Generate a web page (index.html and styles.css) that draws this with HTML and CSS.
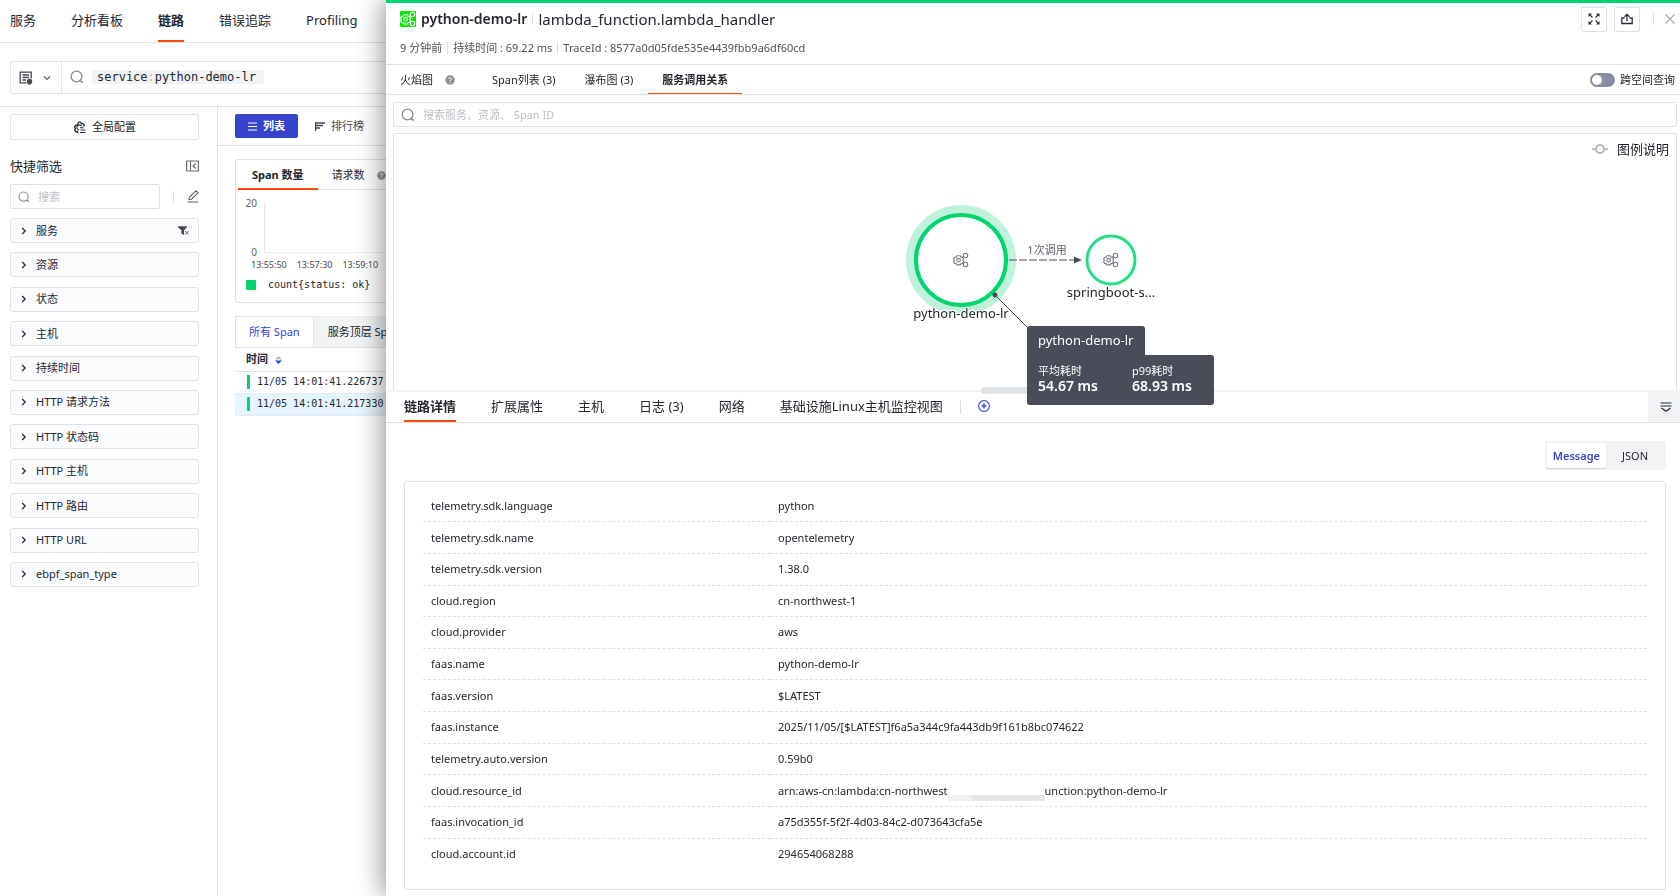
FILE: index.html
```html
<!DOCTYPE html>
<html lang="zh-CN">
<head>
  <meta charset="UTF-8" />
  <meta name="viewport" content="width=device-width, initial-scale=1.0" />
  <title>链路</title>
  <link rel="stylesheet" href="styles.css">
</head>
<body>
  <!-- Shared icons -->
  <svg class="sprite" aria-hidden="true">
    <symbol id="i-search" viewBox="0 0 14 14"><circle cx="6.5" cy="6.5" r="5.4" fill="none" stroke="currentColor" stroke-width="1.3"/><path d="M10.2 10.6l2.6 2" fill="none" stroke="currentColor" stroke-width="1.6"/></symbol>
    <symbol id="i-right" viewBox="0 0 8 8"><path d="M2.2 1l3 3-3 3" fill="none" stroke="currentColor" stroke-width="1.2"/></symbol>
    <symbol id="i-help" viewBox="0 0 10 10"><circle cx="5" cy="5" r="4.7" fill="currentColor"/><path d="M3.6 4.1c0-2 2.9-1.9 2.9-.2 0 1.1-1.4 1-1.4 2.1M5.1 7v1" fill="none" stroke="#fff" stroke-width="1"/></symbol>
    <symbol id="i-lambda" viewBox="0 0 16 16">
      <g fill="none" stroke="currentColor" stroke-width="1.1" stroke-linejoin="round">
        <path d="M3.9 3.8h3.4l.7 1.4 1.600.2 1 1.800-.8 1.300.8 1.300-1 1.600-1.600.2-.7 1.300H3.900l-.8-1.300-1.500-.2-1-1.600.8-1.300-.8-1.500 1-1.600 1.500-.2z"/>
        <circle cx="5.600" cy="8.200" r="1.800"/>
        <circle cx="12.500" cy="3.500" r="2.200"/><circle cx="12.500" cy="12.500" r="2.200"/>
        <path d="M9.200 5.200l1.400-.6M9.200 11.200l1.400.6"/>
      </g>
    </symbol>
  </svg>

  <nav class="topnav">
    <a href="#">服务</a>
    <a href="#">分析看板</a>
    <a href="#" class="active">链路</a>
    <a href="#">错误追踪</a>
    <a href="#">Profiling</a>
  </nav>

  <header class="query-bar">
    <div class="query-box">
      <button class="query-type" aria-label="查询方式">
        <svg width="14" height="14" viewBox="0 0 14 14"><path d="M12.200 7.500V1.200H1.200v10.600h6.300M3.500 4h6.400M3.500 6.500h6.400M3.500 9h3.500" fill="none" stroke="#45484f" stroke-width="1.300"/><circle cx="10.500" cy="10.500" r="2.700" fill="#45484f"/><path d="M9.500 12h2v1.800h-2z" fill="#45484f"/></svg>
        <svg width="8" height="8" viewBox="0 0 8 8"><path d="M1 2.500l3 3 3-3" fill="none" stroke="#60646c" stroke-width="1.200"/></svg>
      </button>
      <label class="query-input">
        <svg class="search-icon" width="14" height="14"><use href="#i-search"/></svg>
        <span class="query-token">service<span class="colon">:</span>python-demo-lr</span>
        <input type="text" aria-label="查询条件">
      </label>
    </div>
  </header>

  <div class="layout">
    <aside class="sidebar">
      <button class="config-btn">
        <svg width="13" height="13" viewBox="0 0 13 13"><path d="M5 12l-.5-1.500-1.700.2-1.200-1.900 1-1.300-1-1.400 1-1.900 1.600.1L5 2.600 5.500 1.200h2.200l.7 1.500 1.700-.1 1.200 1.800-.6 1.100" fill="none" stroke="#2b2f38" stroke-width="1.300"/><path d="M8.800 5.200A2.600 2.600 0 1 0 6 9M7 6.700h3.500M7.500 9h5M7 11.500h5.500" fill="none" stroke="#2b2f38" stroke-width="1.100"/></svg>
        全局配置
      </button>
      <div class="filter-head">
        <h2>快捷筛选</h2>
        <button class="icon-btn" aria-label="收起">
          <svg width="13" height="12" viewBox="0 0 13 12"><path d="M.6 1h11.800v10H.6zM4.500 1v10M9.800 3.500L7 6l2.800 2.500" fill="none" stroke="#6b6f76" stroke-width="1.200"/></svg>
        </button>
      </div>
      <div class="filter-search">
        <label class="search-field">
          <svg class="search-icon" width="12" height="12"><use href="#i-search"/></svg>
          <input type="text" placeholder="搜索" aria-label="搜索">
        </label>
        <i class="vline"></i>
        <button class="icon-btn" aria-label="编辑">
          <svg width="12" height="13" viewBox="0 0 12 13"><path d="M2 9.500l.5-2.500L9 .8l2 2L4.500 9.200zM.5 12h11" fill="none" stroke="#60646c" stroke-width="1.100"/></svg>
        </button>
      </div>
      <div class="filters">
        <button class="filter"><svg width="8" height="8"><use href="#i-right"/></svg>服务
          <svg class="funnel" width="11" height="10" viewBox="0 0 11 10"><path d="M.2.300h8.600v1.200L6 4.200V9L3.400 7.500V4.200L.2 1.500z" fill="#45484f"/><path d="M7 5l3.500 3.500M10.500 5L7 8.500" stroke="#60646c" fill="none"/></svg>
        </button>
        <button class="filter"><svg width="8" height="8"><use href="#i-right"/></svg>资源</button>
        <button class="filter"><svg width="8" height="8"><use href="#i-right"/></svg>状态</button>
        <button class="filter"><svg width="8" height="8"><use href="#i-right"/></svg>主机</button>
        <button class="filter"><svg width="8" height="8"><use href="#i-right"/></svg>持续时间</button>
        <button class="filter"><svg width="8" height="8"><use href="#i-right"/></svg>HTTP 请求方法</button>
        <button class="filter"><svg width="8" height="8"><use href="#i-right"/></svg>HTTP 状态码</button>
        <button class="filter"><svg width="8" height="8"><use href="#i-right"/></svg>HTTP 主机</button>
        <button class="filter"><svg width="8" height="8"><use href="#i-right"/></svg>HTTP 路由</button>
        <button class="filter"><svg width="8" height="8"><use href="#i-right"/></svg>HTTP URL</button>
        <button class="filter"><svg width="8" height="8"><use href="#i-right"/></svg>ebpf_span_type</button>
      </div>
    </aside>

    <main class="content">
      <div class="view-switch">
        <button class="view active">
          <svg width="9" height="9" viewBox="0 0 9 9"><path d="M0 1h9M0 4.500h9M0 8h9" stroke="#fff" stroke-width="1"/></svg>列表
        </button>
        <button class="view">
          <svg width="10" height="9" viewBox="0 0 10 9"><path d="M.5 9V0M0 1h10M0 3.500h8M0 6h5" stroke="#45484f" stroke-width="1.400"/></svg>排行榜
        </button>
      </div>

      <section class="chart-card">
        <div class="chart-tabs">
          <button class="active">Span 数量</button>
          <button>请求数 <svg class="help" width="9" height="9"><use href="#i-help"/></svg></button>
        </div>
        <div class="chart">
          <div class="y-axis"><span>20</span><span>0</span></div>
          <div class="plot"></div>
        </div>
        <div class="x-axis"><span>13:55:50</span><span>13:57:30</span><span>13:59:10</span></div>
        <div class="legend"><i></i>count{status: ok}</div>
      </section>

      <div class="span-tabs">
        <button class="active">所有 Span</button>
        <button>服务顶层 Span</button>
      </div>
      <table class="span-table">
        <thead>
          <tr><th>时间 <svg width="7" height="8" viewBox="0 0 7 8"><path d="M0 3.300L3.500 0 7 3.300z" fill="#b5b8be"/><path d="M0 4.500h7L3.500 8z" fill="#3644cb"/></svg></th></tr>
        </thead>
        <tbody>
          <tr><td><i class="status"></i>11/05 14:01:41.226737</td></tr>
          <tr class="selected"><td><i class="status"></i>11/05 14:01:41.217330</td></tr>
        </tbody>
      </table>
    </main>
  </div>

  <!-- Trace detail drawer -->
  <section class="drawer">
    <header class="drawer-head">
      <div class="title-row">
        <svg class="service-icon" width="16" height="16"><use href="#i-lambda"/></svg>
        <strong>python-demo-lr</strong>
        <i class="vline"></i>
        <span class="resource">lambda_function.lambda_handler</span>
        <div class="head-actions">
          <button class="square" aria-label="全屏">
            <svg width="12" height="12" viewBox="0 0 12 12"><path d="M4.500 4.500L1.500 1.500M7.500 4.500l3-3M4.500 7.500l-3 3M7.500 7.500l3 3" stroke="#2b2f38" stroke-width="1.200"/><path d="M.5.500h3.500l-3.500 3.500zM11.500.500H8l3.500 3.500zM.5 11.500h3.500L.5 8zM11.500 11.500H8L11.500 8z" fill="#2b2f38"/></svg>
          </button>
          <button class="square" aria-label="分享">
            <svg width="12" height="12" viewBox="0 0 12 12"><path d="M3.500 5H.8v5.500h10.400V5H8.500M6 8V1.500M3.500 3.800L6 1.300l2.500 2.500" fill="none" stroke="#2b2f38" stroke-width="1.300"/></svg>
          </button>
          <i class="vline"></i>
          <button class="icon-btn" aria-label="关闭">
            <svg width="10" height="10" viewBox="0 0 10 10"><path d="M.5.500l9 9M9.500.500l-9 9" stroke="#a4a7a8" stroke-width="1.100"/></svg>
          </button>
        </div>
      </div>
      <div class="meta">
        <span>9 分钟前</span><i class="vline"></i>
        <span>持续时间 : 69.22 ms</span><i class="vline"></i>
        <span>TraceId : 8577a0d05fde535e4439fbb9a6df60cd</span>
      </div>
    </header>

    <div class="trace-tabs">
      <button>火焰图 <svg class="help" width="10" height="10"><use href="#i-help"/></svg></button>
      <button>Span列表 (3)</button>
      <button>瀑布图 (3)</button>
      <button class="active">服务调用关系</button>
      <label class="switch"><input type="checkbox"> 跨空间查询</label>
    </div>

    <label class="search-field trace-search">
      <svg class="search-icon" width="14" height="14"><use href="#i-search"/></svg>
      <input type="text" placeholder="搜索服务、资源、 Span ID" aria-label="搜索服务、资源、 Span ID">
    </label>

    <div class="topology">
      <button class="legend-btn">
        <svg width="16" height="10" viewBox="0 0 16 10"><path d="M0 5h4M12 5h4" stroke="#b5b8be" stroke-width="2"/><circle cx="8" cy="5" r="4" fill="none" stroke="#b5b8be" stroke-width="2"/></svg>
        图例说明
      </button>
      <div class="graph">
        <svg width="400" height="256" viewBox="0 0 400 256">
          <circle cx="126" cy="126" r="55" fill="#bff2da"/>
          <circle cx="126" cy="126" r="45" fill="#fff" stroke="#02d46f" stroke-width="4"/>
          <circle cx="276" cy="126" r="24" fill="#fff" stroke="#25dc88" stroke-width="3"/>
          <svg class="node-icon" x="118" y="118" width="16" height="16"><use href="#i-lambda"/></svg>
          <svg class="node-icon" x="268" y="118" width="16" height="16"><use href="#i-lambda"/></svg>
          <path d="M174 126h65" stroke="#4a4d59" stroke-dasharray="8 2"/>
          <path d="M239 122.500l8 3.500-8 3.500z" fill="#4a4d59"/>
          <text class="edge-label" x="212" y="120" text-anchor="middle">1次调用</text>
          <text class="node-label" x="126" y="184" text-anchor="middle">python-demo-lr</text>
          <text class="node-label" x="276" y="163" text-anchor="middle">springboot-s...</text>
          <path d="M160 161l34 34" stroke="#4a4d59"/>
          <circle cx="160" cy="161" r="2.500" fill="#4a4d59"/>
        </svg>
        <i class="resize-handle"></i>
        <div class="tooltip">
          <div class="tip-name">python-demo-lr</div>
          <dl class="tip-body">
            <div><dt>平均耗时</dt><dd>54.67 ms</dd></div>
            <div><dt>p99耗时</dt><dd>68.93 ms</dd></div>
          </dl>
        </div>
      </div>
    </div>

    <div class="detail-tabs">
      <button class="active">链路详情</button>
      <button>扩展属性</button>
      <button>主机</button>
      <button>日志 (3)</button>
      <button>网络</button>
      <button>基础设施Linux主机监控视图</button>
      <i class="vline"></i>
      <button class="add" aria-label="添加">
        <svg width="12" height="12" viewBox="0 0 12 12"><circle cx="6" cy="6" r="5.400" fill="none" stroke="#3644cb" stroke-width="1.100"/><path d="M6 3.500v5M3.500 6h5" stroke="#3644cb" stroke-width="1.400"/></svg>
      </button>
      <button class="collapse" aria-label="折叠">
        <svg width="12" height="10" viewBox="0 0 12 10"><path d="M.5 1h11M.5 4h11" stroke="#2b2f38" stroke-width="1.200"/><path d="M1.500 6L6 9.200 10.500 6" fill="none" stroke="#2b2f38" stroke-width="1.400"/></svg>
      </button>
    </div>

    <div class="detail">
      <div class="format">
        <button class="active">Message</button>
        <button>JSON</button>
      </div>
      <div class="attrs-card">
        <table class="attrs">
          <tr><th>telemetry.sdk.language</th><td>python</td></tr>
          <tr><th>telemetry.sdk.name</th><td>opentelemetry</td></tr>
          <tr><th>telemetry.sdk.version</th><td>1.38.0</td></tr>
          <tr><th>cloud.region</th><td>cn-northwest-1</td></tr>
          <tr><th>cloud.provider</th><td>aws</td></tr>
          <tr><th>faas.name</th><td>python-demo-lr</td></tr>
          <tr><th>faas.version</th><td>$LATEST</td></tr>
          <tr><th>faas.instance</th><td>2025/11/05/[$LATEST]f6a5a344c9fa443db9f161b8bc074622</td></tr>
          <tr><th>telemetry.auto.version</th><td>0.59b0</td></tr>
          <tr><th>cloud.resource_id</th><td>arn:aws-cn:lambda:cn-northwest<i class="mask"></i>unction:python-demo-lr</td></tr>
          <tr><th>faas.invocation_id</th><td>a75d355f-5f2f-4d03-84c2-d073643cfa5e</td></tr>
          <tr><th>cloud.account.id</th><td>294654068288</td></tr>
        </table>
      </div>
    </div>
  </section>
</body>
</html>
```
FILE: styles.css
```css
* { margin: 0; padding: 0; box-sizing: border-box; }
body {
  font-family: "Noto Sans", "Noto Sans CJK SC", sans-serif;
  font-size: 11px;
  line-height: 16px;
  color: #24272e;
  background: #fff;
  min-height: 100vh;
  display: flex;
  flex-direction: column;
  overflow: hidden;
}
button, input { font: inherit; color: inherit; border: none; background: none; }
button { cursor: pointer; white-space: nowrap; }
input { outline: none; min-width: 0; }
a { color: inherit; text-decoration: none; }
svg { flex: none; }
input::placeholder { color: #bcbfc4; opacity: 1; }
.sprite { display: none; }
.vline { width: 1px; height: 12px; background: #dcdfe4; flex: none; }
.search-icon { color: #8a8d92; }
.help { color: #8e9196; }
.icon-btn { display: flex; }

/* Top navigation */
.topnav {
  display: flex;
  gap: 35px;
  height: 43px;
  padding: 0 10px;
  border-bottom: 1px solid #dfe1e6;
  font-size: 13px;
}
.topnav a { line-height: 40px; height: 42px; }
.topnav .active { font-weight: bold; border-bottom: 2px solid #ff4b0a; }

/* Query bar */
.query-bar { padding: 18px 10px 12px; border-bottom: 1px solid #dfe1e6; }
.query-box {
  display: flex;
  height: 33px;
  border: 1px solid #dfe1e6;
  border-radius: 2px;
}
.query-type {
  display: flex;
  align-items: center;
  gap: 10px;
  padding: 0 10px 0 8px;
  border-right: 1px solid #dfe1e6;
}
.query-input { display: flex; align-items: center; flex: 1; padding: 0 0 1px 8px; gap: 8px; }
.query-token {
  font-family: "DejaVu Sans Mono", monospace;
  font-size: 12px;
  line-height: 14px;
  padding: 0 8px 0 5px;
  background: #f1f3f5;
  border-radius: 2px;
}
.query-token .colon { color: #e8a96a; }
.query-input input { flex: 1; }

.layout { display: flex; flex: 1; }

/* Sidebar */
.sidebar {
  width: 218px;
  flex: none;
  padding: 7px 18px 0 10px;
  border-right: 1px solid #dfe1e6;
}
.config-btn {
  display: flex;
  align-items: center;
  justify-content: center;
  gap: 6px;
  width: 100%;
  height: 26px;
  border: 1px solid #dfe1e6;
  border-radius: 2px;
}
.filter-head {
  display: flex;
  align-items: center;
  justify-content: space-between;
  height: 44px;
  padding-top: 8px;
}
.filter-head h2 { font-size: 13px; font-weight: normal; }
.filter-search { display: flex; align-items: center; justify-content: space-between; }
.filter-search .search-field { width: 150px; }
.search-field {
  display: flex;
  align-items: center;
  gap: 8px;
  height: 25px;
  padding: 0 7px;
  border: 1px solid #dfe1e6;
  border-radius: 2px;
}
.search-field input { flex: 1; }
.filters {
  display: flex;
  flex-direction: column;
  justify-content: space-between;
  height: 369px;
  margin-top: 9px;
}
.filter {
  display: flex;
  align-items: center;
  gap: 8px;
  height: 25px;
  padding: 0 9px;
  background: #fafbfd;
  border: 1px solid #dfe1e6;
  border-radius: 3px;
}
.filter .funnel { margin-left: auto; }

/* Span list */
.content { flex: 1; min-width: 0; }
.view-switch {
  display: flex;
  height: 39px;
  padding: 7px 17px;
  border-bottom: 1px solid #dfe1e6;
}
.view {
  display: flex;
  align-items: center;
  gap: 6px;
  height: 24px;
  padding: 0 13px;
  margin-right: 4px;
  color: #45484f;
}
.view.active { background: #3644cb; color: #fff; font-weight: bold; border-radius: 2px; }
.chart-card {
  margin: 13px 17px;
  height: 144px;
  border: 1px solid #dfe1e6;
  border-radius: 2px;
}
.chart-tabs { display: flex; height: 30px; border-bottom: 1px solid #dfe1e6; padding-left: 2px; }
.chart-tabs button {
  display: flex;
  align-items: center;
  gap: 12px;
  height: 30px;
  padding: 2px 14px 0;
  border-bottom: 2px solid transparent;
}
.chart-tabs .active { font-weight: bold; border-color: #ff4b0a; }
.chart { display: flex; height: 63px; padding-top: 12px; }
.y-axis {
  width: 28px;
  padding-right: 7px;
  display: flex;
  flex-direction: column;
  justify-content: space-between;
  text-align: right;
  font-size: 10px;
  line-height: 2px;
  color: #60646c;
}
.plot { flex: 1; border-left: 1px solid #e4e6ea; border-bottom: 1px solid #eceef1; }
.x-axis { display: flex; gap: 10px; padding: 4px 0 0 15px; font-size: 9px; color: #45484f; }
.legend {
  display: flex;
  align-items: center;
  gap: 12px;
  padding: 4px 10px;
  font: 10px/16px "DejaVu Sans Mono", monospace;
}
.legend i { width: 10px; height: 10px; background: #02d46f; border-radius: 1px; }
.span-tabs { display: flex; height: 32px; margin: 0 17px; border-bottom: 1px solid #dfe1e6; }
.span-tabs button { padding: 0 14px; background: #f1f3f5; border-top: 1px solid #eceef1; }
.span-tabs .active {
  padding: 0 13px;
  background: #fff;
  color: #3644cb;
  border: 1px solid #dfe1e6;
  border-bottom: none;
}
.span-table { width: calc(100% - 17px); margin-left: 17px; border-collapse: collapse; }
.span-table th { height: 23px; padding-left: 11px; text-align: left; border-bottom: 1px solid #dfe1e6; }
.span-table th svg { margin-left: 4px; vertical-align: middle; }
.span-table td {
  height: 22px;
  padding-left: 12px;
  font: 10px/14px "DejaVu Sans Mono", monospace;
  border-bottom: 1px solid #e4ecf3;
}
.span-table .selected { background: #e6f4fd; }
.status {
  display: inline-block;
  width: 3px;
  height: 14px;
  margin-right: 7px;
  background: #02d46f;
  vertical-align: middle;
}

/* Drawer */
.drawer {
  position: fixed;
  top: 0;
  right: 0;
  bottom: 0;
  left: 386px;
  display: flex;
  flex-direction: column;
  background: #fff;
  border-top: 3px solid #02d46f;
  box-shadow: -4px 0 24px rgba(0, 0, 0, 0.4);
}
.drawer-head { height: 62px; border-bottom: 1px solid #dfe1e6; padding: 3px 5px 0 14px; }
.title-row { display: flex; align-items: center; gap: 5px; font-size: 14px; height: 26px; }
.title-row strong { font-weight: 600; }
.title-row .resource { font-size: 15px; }
.service-icon { background: #08e808; color: #fff; border-radius: 1px; }
.head-actions { display: flex; align-items: center; gap: 7px; margin-left: auto; }
.square {
  display: flex;
  align-items: center;
  justify-content: center;
  width: 26px;
  height: 25px;
  border: 1px solid #dfe1e6;
  border-radius: 2px;
}
.head-actions .vline { margin: 0 4px 0 6px; }
.meta { display: flex; align-items: center; gap: 5px; margin-top: 8px; color: #50535a; }
.trace-tabs {
  display: flex;
  align-items: center;
  height: 30px;
  border-bottom: 1px solid #dfe1e6;
  flex: none;
}
.trace-tabs button {
  display: flex;
  align-items: center;
  gap: 12px;
  height: 29px;
  padding: 2px 14px 0;
  border-bottom: 1px solid transparent;
}
.trace-tabs button + button { margin-left: 1px; }
.trace-tabs button:nth-of-type(2) { margin-left: 9px; }
.trace-tabs .active { font-weight: bold; border-color: #ff4b0a; }
.switch { display: flex; align-items: center; gap: 5px; margin-left: auto; padding-right: 5px; }
.switch input {
  appearance: none;
  width: 25px;
  height: 14px;
  padding: 2px;
  border-radius: 7px;
  background: #898da1;
}
.switch input::before {
  content: "";
  display: block;
  width: 10px;
  height: 10px;
  border-radius: 50%;
  background: #fff;
}
.switch input:checked::before { margin-left: auto; }
.trace-search { margin: 7px 3px 6px 7px; flex: none; }

/* Topology */
.topology {
  position: relative;
  z-index: 1;
  height: 257px;
  flex: none;
  margin: 0 3px 0 7px;
  border: 1px solid #dfe1e6;
  border-bottom: none;
}
.legend-btn {
  position: absolute;
  top: 5px;
  right: 7px;
  display: flex;
  align-items: center;
  gap: 9px;
  font-size: 13px;
  line-height: 20px;
}
.graph { position: relative; width: 400px; margin: 0 auto; }
.graph > svg { display: block; }
.node-icon { color: #777a80; }
.node-label {
  font-size: 13px;
  fill: #24272e;
  stroke: #fff;
  stroke-width: 2px;
  paint-order: stroke;
}
.edge-label { font-size: 11px; fill: #60646c; }
.resize-handle {
  position: absolute;
  left: 146px;
  top: 253px;
  width: 104px;
  height: 7px;
  border-radius: 4px;
  background: #dfe2e7;
}
.tooltip {
  position: absolute;
  left: 192px;
  top: 192px;
  width: 187px;
  color: #fff;
  white-space: nowrap;
}
.tip-name {
  width: 118px;
  padding: 4px 11px 5px;
  font-size: 13px;
  line-height: 20px;
  background: #4a4d59;
  border-radius: 3px 3px 0 0;
}
.tip-body { display: flex; padding: 8px 11px 6px; background: #4a4d59; border-radius: 0 3px 3px 3px; }
.tip-body div { width: 94px; flex: none; }
.tip-body div:last-child { width: auto; }
.tip-body dd { font-size: 14px; font-weight: 600; line-height: 14px; padding-bottom: 6px; }

/* Details */
.detail-tabs {
  display: flex;
  align-items: center;
  gap: 35px;
  height: 33px;
  flex: none;
  padding-left: 18px;
  border-top: 2px solid #f1f3f5;
  border-bottom: 1px solid #dfe1e6;
  font-size: 13px;
}
.detail-tabs button { height: 30px; border-bottom: 2px solid transparent; }
.detail-tabs .active { font-weight: bold; border-color: #ff4b0a; }
.detail-tabs .vline { height: 14px; margin: 0 -18px; }
.detail-tabs .add { display: flex; align-items: center; }
.detail-tabs .collapse {
  display: flex;
  align-items: center;
  justify-content: center;
  width: 32px;
  margin-left: auto;
  padding-left: 4px;
  background: #f1f3f5;
  border: none;
  border-radius: 3px 0 0 3px;
}
.detail {
  display: flex;
  flex-direction: column;
  align-items: flex-end;
  padding: 18px 14px 0 18px;
}
.format { display: flex; padding: 2px; background: #f1f3f5; border-radius: 2px; }
.format button { height: 25px; padding: 0 16px; }
.format .active {
  padding: 0 6px;
  font-weight: 600;
  color: #3644cb;
  background: #fff;
  border-radius: 2px;
  box-shadow: 0 1px 1px #cfd2d7;
}
.attrs-card {
  width: 100%;
  margin-top: 11px;
  padding: 9px 18px 20px;
  border: 1px solid #dfe1e6;
  border-radius: 3px;
}
.attrs { width: 100%; height: 378px; border-collapse: collapse; table-layout: fixed; }
.attrs th, .attrs td {
  text-align: left;
  font-weight: normal;
  padding: 0 8px;
  border-bottom: 1px dashed #dfe1e6;
}
.attrs th { width: 347px; }
.attrs tr:last-child > * { border-bottom: none; }
.mask {
  display: inline-block;
  width: 97px;
  height: 6px;
  margin-bottom: -3px;
  vertical-align: text-bottom;
  background: linear-gradient(90deg, #f0f0f1 25%, #e6e7e9 25%);
}
```
